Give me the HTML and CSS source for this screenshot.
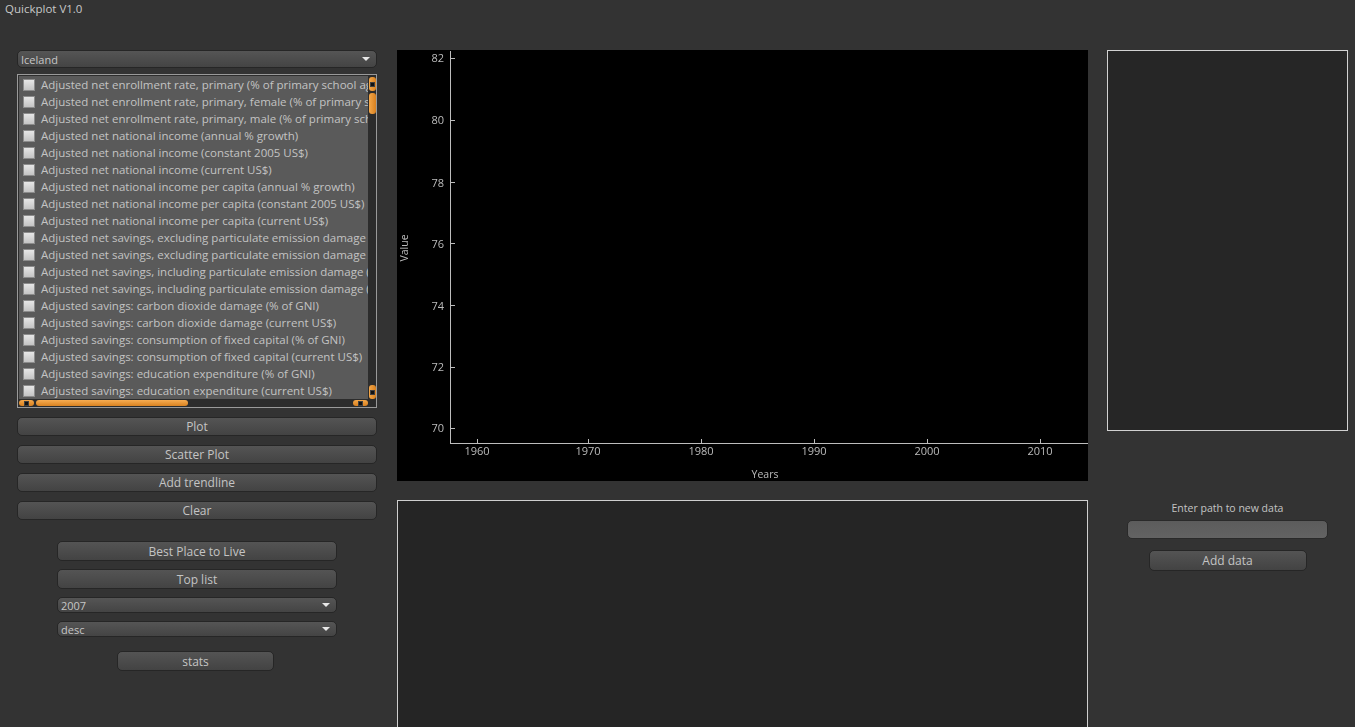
FILE: index.html
```html
<!DOCTYPE html>
<html>
<head>
<meta charset="utf-8">
<link rel="stylesheet" href="styles.css">
<title>Quickplot V1.0</title>
</head>
<body>
<div class="titlebar">Quickplot V1.0</div>
<div class="main">
  <div class="leftcol">
    <div class="combo combo-country"><span>Iceland</span><i class="arrow"></i></div>
    <div class="list">
      <div class="list-view">
        <div class="row"><span class="cb"></span>Adjusted net enrollment rate, primary (% of primary school age children)</div>
        <div class="row"><span class="cb"></span>Adjusted net enrollment rate, primary, female (% of primary school age children)</div>
        <div class="row"><span class="cb"></span>Adjusted net enrollment rate, primary, male (% of primary school age children)</div>
        <div class="row"><span class="cb"></span>Adjusted net national income (annual % growth)</div>
        <div class="row"><span class="cb"></span>Adjusted net national income (constant 2005 US$)</div>
        <div class="row"><span class="cb"></span>Adjusted net national income (current US$)</div>
        <div class="row"><span class="cb"></span>Adjusted net national income per capita (annual % growth)</div>
        <div class="row"><span class="cb"></span>Adjusted net national income per capita (constant 2005 US$)</div>
        <div class="row"><span class="cb"></span>Adjusted net national income per capita (current US$)</div>
        <div class="row"><span class="cb"></span>Adjusted net savings, excluding particulate emission damage (% of GNI)</div>
        <div class="row"><span class="cb"></span>Adjusted net savings, excluding particulate emission damage (current US$)</div>
        <div class="row"><span class="cb"></span>Adjusted net savings, including particulate emission damage (% of GNI)</div>
        <div class="row"><span class="cb"></span>Adjusted net savings, including particulate emission damage (current US$)</div>
        <div class="row"><span class="cb"></span>Adjusted savings: carbon dioxide damage (% of GNI)</div>
        <div class="row"><span class="cb"></span>Adjusted savings: carbon dioxide damage (current US$)</div>
        <div class="row"><span class="cb"></span>Adjusted savings: consumption of fixed capital (% of GNI)</div>
        <div class="row"><span class="cb"></span>Adjusted savings: consumption of fixed capital (current US$)</div>
        <div class="row"><span class="cb"></span>Adjusted savings: education expenditure (% of GNI)</div>
        <div class="row"><span class="cb"></span>Adjusted savings: education expenditure (current US$)</div>
      </div>
      <div class="vscroll">
        <span class="sbtn"><b></b></span>
        <span class="vhandle"></span>
        <span class="vtrack"></span>
        <span class="sbtn"><b></b></span>
      </div>
      <div class="hscroll">
        <span class="sbtn hbtn"><b></b></span>
        <span class="hhandle"></span>
        <span class="htrack"></span>
        <span class="sbtn hbtn"><b></b></span>
      </div>
      <div class="corner"></div>
    </div>
    <div class="btn wide">Plot</div>
    <div class="btn wide">Scatter Plot</div>
    <div class="btn wide">Add trendline</div>
    <div class="btn wide">Clear</div>
    <div class="subgroup">
      <div class="btn sub">Best Place to Live</div>
      <div class="btn sub">Top list</div>
      <div class="combo small"><span>2007</span><i class="arrow"></i></div>
      <div class="combo small"><span>desc</span><i class="arrow"></i></div>
      <div class="btn stats">stats</div>
    </div>
  </div>
  <div class="midcol">
    <div class="chart">
      <svg width="691" height="431" viewBox="0 0 691 431">
        <g class="axis" stroke="#bdbdbd" stroke-width="1" fill="none">
          <line x1="53.5" y1="1" x2="53.5" y2="393.5"/>
          <line x1="53" y1="393.5" x2="691" y2="393.5"/>
          <line x1="53" y1="8.5" x2="58" y2="8.5"/>
          <line x1="53" y1="70.5" x2="58" y2="70.5"/>
          <line x1="53" y1="132.5" x2="58" y2="132.5"/>
          <line x1="53" y1="193.5" x2="58" y2="193.5"/>
          <line x1="53" y1="255.5" x2="58" y2="255.5"/>
          <line x1="53" y1="317.5" x2="58" y2="317.5"/>
          <line x1="53" y1="378.5" x2="58" y2="378.5"/>
          <line x1="80.5" y1="389" x2="80.5" y2="393"/>
          <line x1="191.5" y1="389" x2="191.5" y2="393"/>
          <line x1="304.5" y1="389" x2="304.5" y2="393"/>
          <line x1="417.5" y1="389" x2="417.5" y2="393"/>
          <line x1="530.5" y1="389" x2="530.5" y2="393"/>
          <line x1="643.5" y1="389" x2="643.5" y2="393"/>
        </g>
        <g class="ylabels" text-anchor="end">
          <text x="47" y="12">82</text>
          <text x="47" y="74">80</text>
          <text x="47" y="137">78</text>
          <text x="47" y="198">76</text>
          <text x="47" y="260">74</text>
          <text x="47" y="321">72</text>
          <text x="47" y="382">70</text>
        </g>
        <g class="xlabels" text-anchor="middle">
          <text x="80" y="405">1960</text>
          <text x="191" y="405">1970</text>
          <text x="304" y="405">1980</text>
          <text x="417" y="405">1990</text>
          <text x="530" y="405">2000</text>
          <text x="643" y="405">2010</text>
        </g>
        <text class="axtitle" x="368" y="428" text-anchor="middle">Years</text>
        <text class="axtitle" transform="translate(11 198) rotate(-90)" text-anchor="middle">Value</text>
      </svg>
    </div>
    <div class="textarea"></div>
  </div>
  <div class="rightcol">
    <div class="box"></div>
    <div class="label">Enter path to new data</div>
    <div class="input"></div>
    <div class="btn adddata">Add data</div>
  </div>
</div>
</body>
</html>
```

FILE: styles.css
```css
html, body {
  margin: 0;
  padding: 0;
  background: #333333;
  height: 100%;
  overflow: hidden;
}
body {
  font-family: "Open Sans", "Noto Sans", "Liberation Sans", sans-serif;
  font-size: 11px;
  color: #c4c4c4;
}
.titlebar {
  height: 18px;
  line-height: 17px;
  padding-left: 5px;
  font-size: 11.5px;
  color: #c8c8c8;
}
.main {
  display: flex;
  align-items: flex-start;
  padding: 32px 0 0 17px;
}
.leftcol {
  width: 360px;
  margin-right: 20px;
  display: flex;
  flex-direction: column;
}
.combo {
  position: relative;
  box-sizing: border-box;
  border: 1px solid #262626;
  border-radius: 5px;
  background: linear-gradient(#555555, #444444);
  color: #c6c6c6;
  display: flex;
  align-items: center;
  padding-left: 3px;
}
.combo-country {
  height: 18px;
  margin-bottom: 6px;
}
.combo .arrow {
  position: absolute;
  right: 6px;
  top: 50%;
  margin-top: -2px;
  width: 0;
  height: 0;
  border-left: 4px solid transparent;
  border-right: 4px solid transparent;
  border-top: 4px solid #e8e8e8;
}
.list {
  box-sizing: border-box;
  height: 334px;
  border: 1px solid #9a9a9a;
  background: #5a5a5a;
  display: grid;
  grid-template-columns: 1fr 8px;
  grid-template-rows: 1fr 8px;
  margin-bottom: 9px;
  box-shadow: inset 0 0 0 1px #2e2e2e;
}
.list-view {
  overflow: hidden;
  padding-top: 1px;
  padding-left: 5px;
  white-space: nowrap;
}
.row {
  height: 17px;
  display: flex;
  align-items: center;
  color: #c3c3c3;
  font-size: 11.5px;
}
.cb {
  flex: none;
  width: 12px;
  height: 12px;
  box-sizing: border-box;
  border: 1px solid #8c8c8c;
  background: linear-gradient(#e6e6e6, #c4c4c4);
  margin-right: 6px;
}
.vscroll {
  background: #2c2c2c;
  display: flex;
  flex-direction: column;
  align-items: center;
  padding: 2px 0 0 0;
}
.sbtn {
  flex: none;
  width: 7px;
  height: 14px;
  border-radius: 3px;
  background: linear-gradient(90deg, #f5a84a, #d8801f);
  display: flex;
  align-items: center;
  justify-content: center;
}
.sbtn b {
  display: block;
  width: 3px;
  height: 3px;
  background: #111;
  border: 1px solid #fff3;
}
.vhandle {
  flex: none;
  width: 7px;
  height: 21px;
  margin-top: 2px;
  border-radius: 3px;
  background: linear-gradient(90deg, #f5a84a, #d8801f);
}
.vtrack {
  flex: 1;
}
.hscroll {
  background: #2c2c2c;
  display: flex;
  align-items: center;
  padding-left: 1px;
}
.sbtn.hbtn {
  width: 15px;
  height: 6px;
  background: linear-gradient(#f5a84a, #d8801f);
}
.hhandle {
  flex: none;
  width: 152px;
  height: 6px;
  margin-left: 2px;
  border-radius: 3px;
  background: linear-gradient(#f7ad52, #d98220);
}
.htrack {
  flex: 1;
}
.corner {
  background: #2c2c2c;
}
.btn {
  box-sizing: border-box;
  border: 1px solid #262626;
  border-radius: 5px;
  background: linear-gradient(#545454, #434343);
  color: #c4c4c4;
  font-size: 12px;
  display: flex;
  align-items: center;
  justify-content: center;
}
.btn.wide {
  height: 19px;
  margin-bottom: 9px;
}
.subgroup {
  margin: 12px 40px 0 40px;
  display: flex;
  flex-direction: column;
}
.btn.sub {
  height: 20px;
  margin-bottom: 8px;
}
.combo.small {
  height: 16px;
  margin-bottom: 8px;
  font-size: 11px;
}
.btn.stats {
  width: 157px;
  height: 20px;
  margin: 6px 0 0 60px;
}
.midcol {
  width: 691px;
  margin-right: 19px;
  display: flex;
  flex-direction: column;
}
.chart {
  height: 431px;
  background: #000;
  margin-bottom: 19px;
}
.chart svg {
  display: block;
  will-change: transform;
}
.chart text {
  font-family: "Open Sans", "Noto Sans", "Liberation Sans", sans-serif;
  font-size: 11px;
  fill: #bcbcbc;
}
.chart .axtitle {
  font-size: 10.5px;
}
.textarea {
  box-sizing: border-box;
  height: 260px;
  border: 1px solid #cfcfcf;
  background: #252525;
}
.rightcol {
  width: 241px;
  display: flex;
  flex-direction: column;
  align-items: center;
}
.box {
  box-sizing: border-box;
  width: 241px;
  height: 381px;
  border: 1px solid #d2d2d2;
  background: #262626;
}
.label {
  margin-top: 70px;
  height: 14px;
  line-height: 14px;
  font-size: 10.5px;
  color: #c4c4c4;
}
.input {
  box-sizing: border-box;
  width: 201px;
  height: 19px;
  margin-top: 5px;
  border: 1px solid #2a2a2a;
  border-radius: 5px;
  background: linear-gradient(#5c5c5c, #636363);
}
.btn.adddata {
  width: 158px;
  height: 21px;
  margin-top: 11px;
}
```
